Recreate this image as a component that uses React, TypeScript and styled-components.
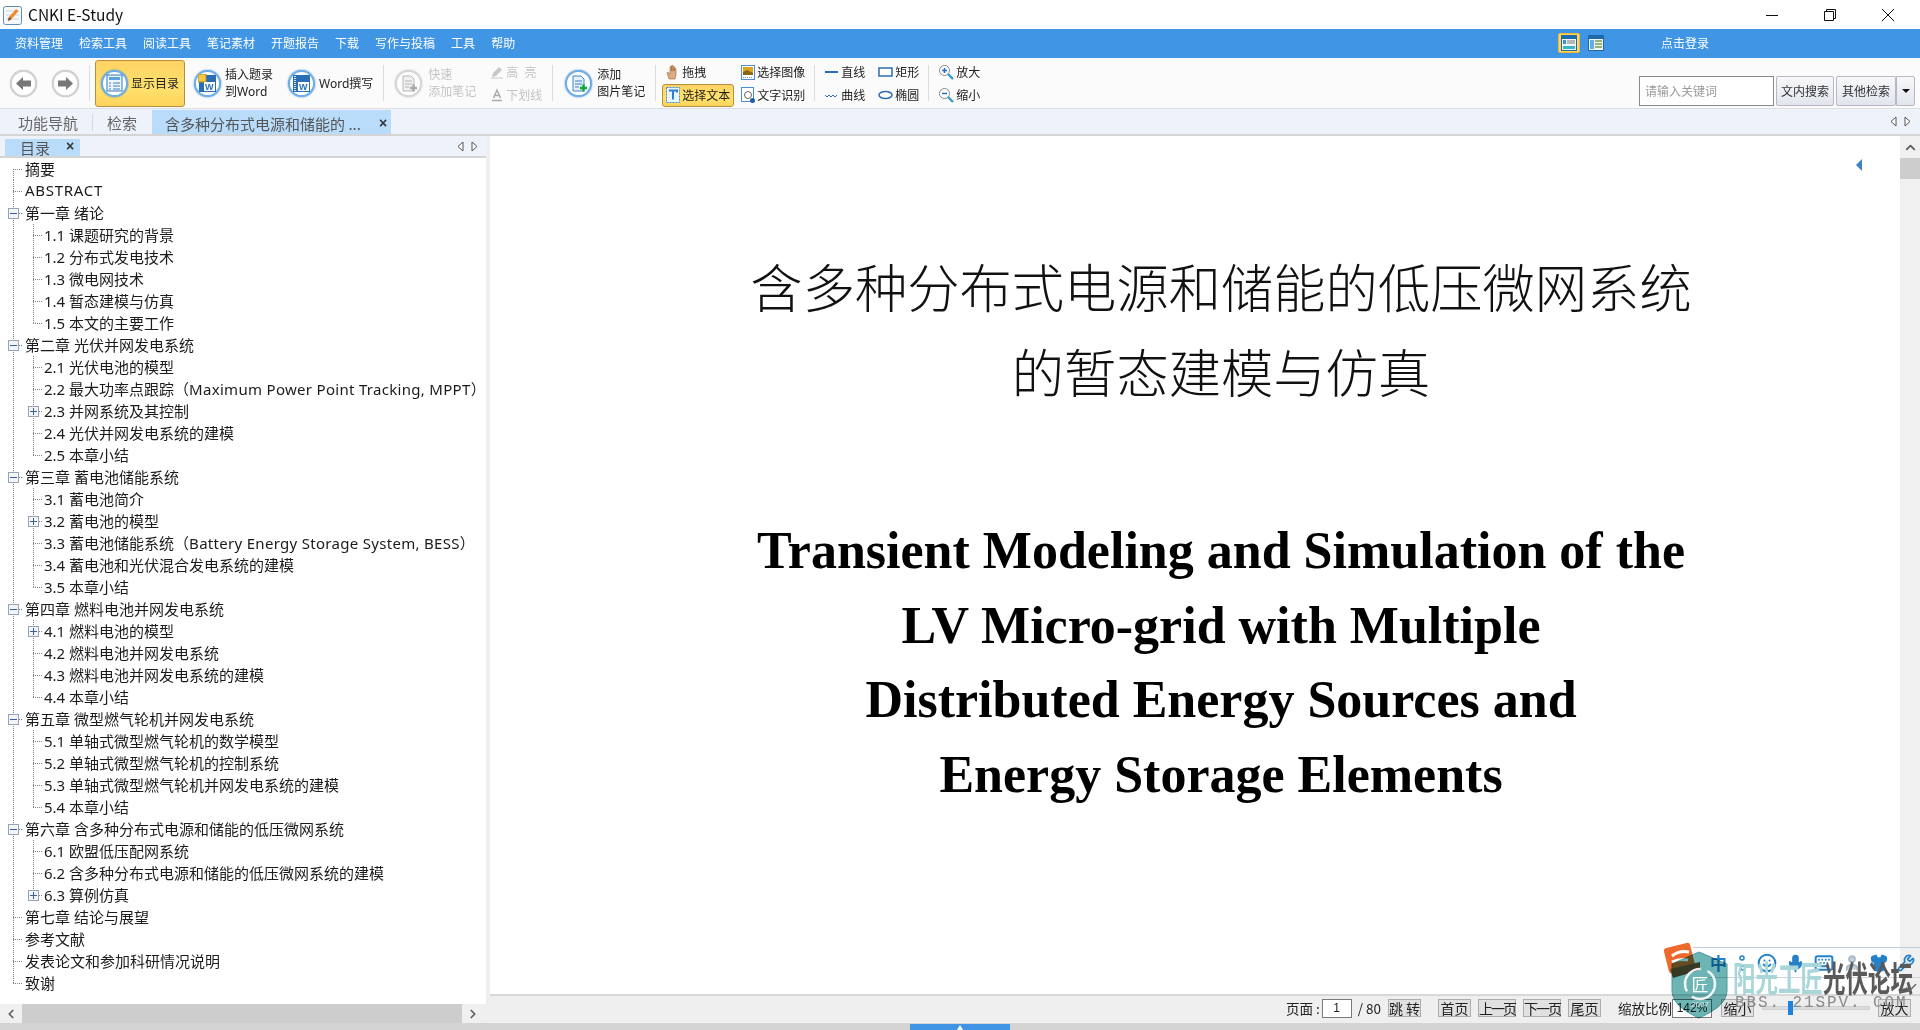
import React from 'react';
import styled, { createGlobalStyle, css } from 'styled-components';
import { Smile, Mic, Keyboard, User, Shirt, Wrench, Check, ChevronUp, ChevronLeft, ChevronRight } from 'lucide-react';

const GlobalStyle = createGlobalStyle`
	html, body {
		margin: 0;
		padding: 0;
		background: #fff;
		overflow: hidden;
	}
	* {
		box-sizing: border-box;
	}
	body {
		font-family: "Noto Sans CJK SC", "Liberation Sans", sans-serif;
		color: #222;
	}
`;

const Shell = styled.div`
	position: relative;
	width: 1920px;
	height: 1030px;
	display: flex;
	flex-direction: column;
	overflow: hidden;
`;

/* title + menu */
const TitleBar = styled.div`
	height: 29px;
	display: flex;
	align-items: center;
	padding-left: 3px;
	background: #fff;
`;

const AppName = styled.span`
	margin: 0 0 2px 6px;
	font-size: 15.5px;
	color: #111;
	font-family: "Noto Sans CJK SC", sans-serif;
`;

const WinControls = styled.div`
	margin-left: auto;
	display: flex;
	padding-right: 3px;
`;

const WinButton = styled.div`
	width: 58px;
	height: 29px;
	display: flex;
	align-items: center;
	justify-content: center;
`;

const MenuBar = styled.div`
	height: 29px;
	background: #4095e5;
	display: flex;
	align-items: center;
	padding: 0 0 2px 15px;
	gap: 16px;
	color: #fff;
	font-size: 12px;
`;

const MenuItem = styled.span`
	white-space: nowrap;
`;

const LayoutSwitch = styled.div`
	margin-left: auto;
	display: flex;
	align-items: center;
	gap: 5px;
`;

const LayoutBtn = styled.div<{ $on?: boolean }>`
	width: 22px;
	height: 20px;
	display: flex;
	align-items: center;
	justify-content: center;
	border-radius: 2px;
	border: 1px solid ${(p) => (p.$on ? '#f2b632' : 'transparent')};
	background: ${(p) => (p.$on ? '#ffd75e' : 'transparent')};
`;

const Login = styled.span`
	margin-left: 38px;
	margin-right: 211px;
	font-size: 12px;
`;

/* toolbar */
const Toolbar = styled.div`
	height: 51px;
	background: #fbfbfb;
	border-bottom: 1px solid #dedede;
	display: flex;
	align-items: center;
	font-family: "Noto Sans", "Noto Sans CJK SC", sans-serif;
	font-size: 12px;
	line-height: 17px;
	color: #222;
`;

const NavCircle = styled.div<{ $ml: number }>`
	width: 27px;
	height: 27px;
	margin-left: ${(p) => p.$ml}px;
	border-radius: 50%;
	border: 2px solid #d4d4d4;
	background: #fff;
	box-shadow: 0 0 1px #999;
	display: flex;
	align-items: center;
	justify-content: center;
	flex: none;
`;

const Sep = styled.div<{ $ml: number }>`
	width: 1px;
	height: 36px;
	margin-left: ${(p) => p.$ml}px;
	background: #dcdcdc;
	flex: none;
`;

const Tool = styled.div<{ $ml: number; $w?: number; $active?: boolean; $off?: boolean; $gap?: number }>`
	margin-left: ${(p) => p.$ml}px;
	${(p) => p.$w && `width: ${p.$w}px;`}
	display: flex;
	align-items: center;
	gap: ${(p) => p.$gap ?? 4}px;
	flex: none;
	white-space: nowrap;
	color: ${(p) => (p.$off ? '#c4c4c4' : '#222')};
	${(p) =>
		p.$active &&
		css`
			height: 47px;
			padding-left: 5px;
			border: 1px solid #b88f3e;
			border-radius: 3px;
			background: linear-gradient(#fdd364, #ffe16c 60%, #fdd45c);
		`}
`;

const ToolCircle = styled.div<{ $off?: boolean }>`
	width: 27px;
	height: 27px;
	border-radius: 50%;
	border: 2px solid ${(p) => (p.$off ? '#d6d6d6' : '#6eaee6')};
	background: #fff;
	box-shadow: 0 0 2px ${(p) => (p.$off ? '#bbb' : '#4c90d0')};
	display: flex;
	align-items: center;
	justify-content: center;
	flex: none;
`;

const Stack = styled.div`
	display: flex;
	flex-direction: column;
`;

const SmallCol = styled.div<{ $ml: number; $w: number }>`
	margin-left: ${(p) => p.$ml}px;
	width: ${(p) => p.$w}px;
	padding-top: 1px;
	flex: none;
	display: flex;
	flex-direction: column;
`;

const SmallTool = styled.div<{ $active?: boolean; $off?: boolean; $pl?: number }>`
	height: 23px;
	display: flex;
	align-items: center;
	gap: 2px;
	white-space: nowrap;
	padding-left: ${(p) => p.$pl ?? 0}px;
	color: ${(p) => (p.$off ? '#c4c4c4' : '#222')};
	${(p) =>
		p.$active &&
		css`
			border: 1px solid #b88f3e;
			border-radius: 3px;
			background: linear-gradient(#fdd364, #ffe16c 60%, #fdd45c);
		`}
`;

const SearchArea = styled.div`
	margin-left: auto;
	margin-right: 5px;
	display: flex;
	gap: 2px;
	align-self: flex-end;
	margin-bottom: 2px;
`;

const SearchInput = styled.div`
	width: 135px;
	height: 30px;
	border: 1px solid #8a8a8a;
	background: #fff;
	color: #999;
	padding-left: 5px;
	display: flex;
	align-items: center;
`;

const SearchButton = styled.div<{ $w: number }>`
	width: ${(p) => p.$w}px;
	height: 30px;
	display: flex;
	align-items: center;
	justify-content: center;
	border: 1px solid #b8b8c2;
	border-radius: 2px;
	background: linear-gradient(#f8f8fa, #e2e5ee);
	color: #333;
`;

const Caret = styled.div`
	width: 19px;
	height: 30px;
	margin-left: -2px;
	display: flex;
	align-items: center;
	justify-content: center;
	border: 1px solid #b8b8c2;
	border-radius: 0 2px 2px 0;
	background: linear-gradient(#f8f8fa, #e2e5ee);
	&::after {
		content: '';
		border-style: solid;
		border-width: 4px 4px 0;
		border-color: #111 transparent transparent;
	}
`;

/* doc tabs */
const TabBar = styled.div`
	height: 27px;
	background: #eef2fa;
	border-bottom: 2px solid #d4d4d4;
	display: flex;
	align-items: flex-end;
	font-size: 15px;
	color: #666;
`;

const PlainTab = styled.div<{ $ml: number }>`
	margin-left: ${(p) => p.$ml}px;
	height: 23px;
	line-height: 23px;
	white-space: nowrap;
`;

const TabDivider = styled.div`
	width: 1px;
	height: 17px;
	margin: 0 0 3px 14px;
	background: #d8d8d8;
`;

const ActiveTab = styled.div`
	margin-left: 15px;
	width: 239px;
	height: 24px;
	background: #b9dcfb;
	display: flex;
	align-items: center;
	padding: 2px 0 0 13px;
	color: #555;
	white-space: nowrap;
`;

const CloseMark = styled.span<{ $ml: number }>`
	margin-left: ${(p) => p.$ml}px;
	font-size: 14px;
	line-height: 1;
	color: #333;
	font-family: "Liberation Sans", sans-serif;
	font-weight: bold;
`;

const ArrowPair = styled.div<{ $mr: number }>`
	margin-left: auto;
	margin-right: ${(p) => p.$mr}px;
	align-self: center;
	display: flex;
	gap: 7px;
`;

/* main */
const Main = styled.div`
	flex: 1;
	display: flex;
	min-height: 0;
`;

const LeftPanel = styled.div`
	width: 486px;
	display: flex;
	flex-direction: column;
	background: #fff;
`;

const SubTabs = styled.div`
	height: 22px;
	flex: none;
	padding-left: 5px;
	background: #eef2fa;
	border-bottom: 2px solid #d4d4d4;
	display: flex;
	align-items: flex-end;
`;

const SubTab = styled.div`
	width: 75px;
	height: 17px;
	overflow: hidden;
	background: #b9dcfb;
	display: flex;
	align-items: flex-start;
	padding-left: 15px;
	font-size: 15px;
	line-height: 18px;
	color: #555;
`;

const Tree = styled.div`
	flex: 1;
	min-height: 0;
	padding-left: 3px;
	overflow: hidden;
`;

const TreeRow = styled.div`
	height: 22px;
	display: flex;
	align-items: center;
	white-space: nowrap;
	font-family: "Noto Sans", "Noto Sans CJK SC", sans-serif;
	font-size: 15px;
	color: #1b1b1b;
`;

const dotV = 'repeating-linear-gradient(to bottom, #808080 0 1px, transparent 1px 2px)';
const dotH = 'repeating-linear-gradient(to right, #808080 0 1px, transparent 1px 2px)';

type LineMode = 'full' | 'top' | 'bottom' | 'none';

const vSize: Record<LineMode, string> = { full: '1px 22px', top: '1px 11px', bottom: '1px 11px', none: '0 0' };
const vPos: Record<LineMode, string> = { full: '10px 0', top: '10px 0', bottom: '10px 11px', none: '0 0' };

const Guide = styled.div<{ $line: LineMode; $branch?: boolean }>`
	width: 20px;
	height: 22px;
	flex: none;
	display: flex;
	align-items: center;
	justify-content: center;
	padding-right: 1px;
	background-repeat: no-repeat;
	background-image: ${dotV}, ${dotH};
	background-size: ${(p) => vSize[p.$line]}, ${(p) => (p.$branch ? '9px 1px' : '0 0')};
	background-position: ${(p) => vPos[p.$line]}, 10px 11px;
`;

const Expander = styled.div<{ $plus?: boolean }>`
	width: 11px;
	height: 11px;
	margin-left: 1px;
	border: 1px solid #9aa3b2;
	background: #f2f5fa;
	display: flex;
	align-items: center;
	justify-content: center;
	position: relative;
	&::before {
		content: '';
		width: 7px;
		height: 1px;
		background: #3a5f95;
	}
	${(p) =>
		p.$plus &&
		css`
			&::after {
				content: '';
				position: absolute;
				width: 1px;
				height: 7px;
				background: #3a5f95;
			}
		`}
`;

const RowText = styled.span<{ $sub?: boolean }>`
	margin: 0 0 2px ${(p) => (p.$sub ? 1 : 2)}px;
`;

const LatinPart = styled.span<{ $track: number }>`
	letter-spacing: ${(p) => p.$track}px;
`;

const HScroll = styled.div`
	height: 19px;
	flex: none;
	background: #f0f0f0;
	display: flex;
	align-items: center;
`;

const ScrollEnd = styled.div`
	width: 22px;
	display: flex;
	align-items: center;
	justify-content: center;
	color: #606060;
`;

const HThumb = styled.div`
	width: 440px;
	height: 19px;
	background: #cdcdcd;
`;

const Gutter = styled.div`
	width: 4px;
	background: #efefef;
`;

const DocColumn = styled.div`
	flex: 1;
	display: flex;
	flex-direction: column;
	min-width: 0;
`;

const DocView = styled.div`
	flex: 1;
	display: flex;
	min-height: 0;
`;

const Page = styled.div`
	position: relative;
	flex: 1;
	background: #fff;
	padding: 107px 0 0 52px;
	text-align: center;
	overflow: hidden;
`;

const PageMarker = styled.div`
	position: absolute;
	top: 23px;
	right: 38px;
	border-style: solid;
	border-width: 6px 6px 6px 0;
	border-color: transparent #3f82c4 transparent transparent;
`;

const CnTitle = styled.div`
	font-size: 52.3px;
	line-height: 85px;
	font-weight: 300;
	color: #111;
	white-space: nowrap;
`;

const EnBlock = styled.div`
	margin-top: 101px;
`;

const EnTitle = styled.div`
	font-family: "Liberation Serif", serif;
	font-size: 52px;
	line-height: 74.7px;
	font-weight: bold;
	color: #000;
	white-space: nowrap;
`;

const VScroll = styled.div`
	width: 20px;
	background: #f0f0f0;
	display: flex;
	flex-direction: column;
	align-items: center;
`;

const VEnd = styled.div`
	height: 22px;
	display: flex;
	align-items: center;
	justify-content: center;
	color: #606060;
`;

const VThumb = styled.div`
	width: 20px;
	height: 21px;
	background: #cdcdcd;
`;

const StatusBar = styled.div`
	height: 29px;
	flex: none;
	background: #efefef;
	border-top: 2px solid #d8d8d8;
	display: flex;
	align-items: center;
	justify-content: flex-end;
	padding: 0 9px 3px 0;
	font-size: 13.5px;
	color: #222;
`;

const StatusText = styled.span<{ $ml?: number }>`
	margin-left: ${(p) => p.$ml ?? 0}px;
	white-space: nowrap;
`;

const StatusBtn = styled.div<{ $w: number; $ml: number; $tight?: boolean }>`
	width: ${(p) => p.$w}px;
	margin-left: ${(p) => p.$ml}px;
	height: 18px;
	border: 1px solid #adadad;
	background: #e1e1e1;
	display: flex;
	align-items: center;
	justify-content: center;
	white-space: nowrap;
	font-size: 14px;
	${(p) => p.$tight && 'letter-spacing: -2px;'}
`;

const StatusInput = styled.div<{ $w: number; $ml: number }>`
	width: ${(p) => p.$w}px;
	margin-left: ${(p) => p.$ml}px;
	height: 19px;
	border: 1px solid #7a7a7a;
	background: #fff;
	display: flex;
	align-items: center;
	justify-content: center;
	font-size: 12px;
	font-family: "Liberation Sans", sans-serif;
`;

const Slider = styled.div`
	width: 108px;
	margin-left: 8px;
	height: 4px;
	background: #dcdcdc;
	border: 1px solid #cfcfcf;
	display: flex;
	align-items: center;
	padding-left: 25px;
`;

const SliderThumb = styled.div`
	width: 5px;
	height: 14px;
	flex: none;
	background: #1c82dc;
`;

const BottomStrip = styled.div`
	height: 7px;
	flex: none;
	background: #d4d4d4;
	display: flex;
	justify-content: center;
	align-items: flex-end;
`;

const Handle = styled.div`
	width: 100px;
	height: 6px;
	background: #4095e5;
	display: flex;
	justify-content: center;
	align-items: flex-end;
	&::after {
		content: '';
		border-style: solid;
		border-width: 0 3px 5px;
		border-color: transparent transparent #fff;
	}
`;

/* watermark on top of everything */
const Watermark = styled.div`
	position: absolute;
	left: 1664px;
	top: 940px;
	width: 256px;
	height: 80px;
	pointer-events: none;
`;

const ImeLine = styled.div<{ $top: number; $color: string }>`
	position: absolute;
	left: 29px;
	right: 0;
	top: ${(p) => p.$top}px;
	height: 1px;
	background: ${(p) => p.$color};
`;

const ImeIcons = styled.div`
	position: absolute;
	left: 46px;
	top: 13px;
	width: 205px;
	display: flex;
	justify-content: space-between;
	align-items: center;
	color: #2480c8;
`;

const ImeZh = styled.span`
	font-size: 17px;
	line-height: 18px;
	font-weight: bold;
`;

const WmBrand = styled.div`
	position: absolute;
	left: 69px;
	top: 19px;
	display: flex;
	font-size: 22.5px;
	line-height: 22px;
	font-weight: bold;
	white-space: nowrap;
	transform: scaleY(1.55);
	transform-origin: top left;
`;

const WmPart = styled.span<{ $color: string }>`
	color: ${(p) => p.$color};
`;

const WmUrl = styled.div`
	position: absolute;
	left: 71px;
	top: 56px;
	font-family: "Liberation Mono", monospace;
	font-size: 16px;
	line-height: 14px;
	letter-spacing: 1.9px;
	color: #8a8a8a;
	white-space: nowrap;
`;

const WmArt = styled.svg<{ $multiply?: boolean }>`
	position: absolute;
	left: 0;
	top: 2px;
	${(p) => p.$multiply && 'mix-blend-mode: multiply;'}
`;

const WmCheck = styled.div`
	position: absolute;
	left: 240px;
	top: 36px;
	color: #666;
`;

/* icons */
const Tri: React.FC<{ dir: 'l' | 'r'; color?: string }> = ({ dir, color = '#555' }) => (
	<svg width='7' height='11' viewBox='0 0 7 11'>
		<path d={dir === 'l' ? 'M6 1L1 5.5L6 10Z' : 'M1 1L6 5.5L1 10Z'} fill='#fff' stroke={color} />
	</svg>
);

const NavArrow: React.FC<{ dir: 'l' | 'r' }> = ({ dir }) => (
	<svg width='17' height='15' viewBox='0 0 17 15'>
		<path d={dir === 'l' ? 'M1 7.5L8 1V4.5H16V10.5H8V14Z' : 'M16 7.5L9 1V4.5H1V10.5H9V14Z'} fill='#777' />
	</svg>
);

const DocIcon = () => (
	<svg width='17' height='18' viewBox='0 0 17 18'>
		<rect x='1' y='1' width='15' height='16' fill='#eef5fc' stroke='#2f78bd' />
		<rect x='3' y='3' width='11' height='3' fill='#5aa2e0' />
		<path d='M3 9h2M7 9h7M3 12h2M7 12h7M3 15h2M7 15h7' stroke='#3a7fbf' />
	</svg>
);

const WordIcon: React.FC<{ spiral?: boolean }> = ({ spiral }) => (
	<svg width='19' height='19' viewBox='0 0 19 19'>
		<rect x='1' y='1' width='17' height='17' fill='#2a6fb5' />
		{spiral ? (
			<path d='M3 2v15' stroke='#cfe2f5' strokeWidth='2' strokeDasharray='1 1' />
		) : (
			<rect x='0' y='0' width='8' height='8' fill='#f5c84a' stroke='#b58a20' />
		)}
		<rect x='6' y='8' width='11' height='9' fill='#fff' />
		<text x='7' y='16' fontSize='9' fontWeight='bold' fill='#2a6fb5' fontFamily='Liberation Sans'>
			W
		</text>
	</svg>
);

const NoteIcon: React.FC<{ off?: boolean }> = ({ off }) => {
	const c = off ? '#b5b5b5' : '#3d85c6';
	return (
		<svg width='19' height='19' viewBox='0 0 19 19'>
			<path d='M4 2h8l3 3v12H4z' fill={off ? '#f1f1f1' : '#e4f0fb'} stroke={c} />
			<path d='M6 7h7M6 10h7M6 13h4' stroke={c} />
			<path d='M11 14h7M14.5 10.5v7' stroke={off ? '#aaa' : '#12a83a'} strokeWidth='2.4' />
		</svg>
	);
};

const Pen = () => (
	<svg width='14' height='14' viewBox='0 0 14 14'>
		<path d='M2 12l1-4 6-6 3 3-6 6z' fill='#c8c8c8' />
		<path d='M1 13h12' stroke='#c8c8c8' />
	</svg>
);

const UnderlineA = () => (
	<svg width='14' height='14' viewBox='0 0 14 14'>
		<path d='M3.5 10L7 2l3.5 8M5 7.5h4' fill='none' stroke='#aaa' strokeWidth='1.5' />
		<path d='M2 12.5h10' stroke='#aaa' strokeWidth='1.5' />
	</svg>
);

const Hand = () => (
	<svg width='14' height='16' viewBox='0 0 14 16'>
		<path d='M3 15L1 9c0-1 1.500-1 2 0l1 1V3c0-1 1.500-1 1.500 0v4V2c0-1 1.500-1 1.500 0v5V3c0-1 1.500-1 1.500 0v4V5c0-1 1.500-1 1.500 0v6l-1 4z' fill='#e0aa80' stroke='#a06a3c' strokeWidth='.6' />
	</svg>
);

const TextSel = () => (
	<svg width='14' height='16' viewBox='0 0 14 16'>
		<rect x='.5' y='.5' width='13' height='15' fill='#eaf4fd' stroke='#3f8edb' strokeDasharray='2 1' />
		<path d='M3 3.500h8v2M7 3.500v9' fill='none' stroke='#2a7fd0' strokeWidth='2' />
	</svg>
);

const ImgSel = () => (
	<svg width='14' height='15' viewBox='0 0 14 15'>
		<rect x='.5' y='.5' width='13' height='14' fill='#fff' stroke='#4b90d0' />
		<rect x='2' y='2' width='10' height='8' fill='#dfa520' />
		<path d='M2 7l4-2 6 3v2H2z' fill='#8b6414' />
		<path d='M2 12.500h10' stroke='#888' strokeDasharray='1 1' />
	</svg>
);

const OcrSel = () => (
	<svg width='14' height='16' viewBox='0 0 14 16'>
		<rect x='.5' y='.5' width='12' height='14' fill='#fff' stroke='#4b90d0' />
		<circle cx='7' cy='8' r='3.500' fill='none' stroke='#666' />
		<rect x='9' y='11' width='5' height='5' rx='2.500' fill='#1f5fa8' />
	</svg>
);

const LineIcon: React.FC<{ kind: 'line' | 'curve' | 'rect' | 'oval' }> = ({ kind }) => (
	<svg width='15' height='12' viewBox='0 0 15 12'>
		{kind === 'line' && <path d='M1 6h13' stroke='#2e6db0' strokeWidth='2' />}
		{kind === 'curve' && <path d='M1 6l2 2 2-2 2 2 2-2 2 2 2-2' fill='none' stroke='#2e6db0' strokeWidth='1' />}
		{kind === 'rect' && <rect x='1' y='2' width='13' height='8' fill='#fff' stroke='#2e6db0' strokeWidth='1.5' />}
		{kind === 'oval' && <ellipse cx='7.500' cy='6' rx='6.500' ry='3.500' fill='#fff' stroke='#2e6db0' strokeWidth='1.5' />}
	</svg>
);

const Magnifier: React.FC<{ plus?: boolean }> = ({ plus }) => (
	<svg width='16' height='16' viewBox='0 0 16 16'>
		<circle cx='6.500' cy='6.500' r='5' fill='#fff' stroke='#8a8a8a' />
		<path d='M10 10l5 5' stroke='#2f9ed0' strokeWidth='2.400' />
		<path d='M4 6.500h5' stroke='#1c6fc0' strokeWidth='1.500' />
		{plus && <path d='M6.500 4v5' stroke='#1c6fc0' strokeWidth='1.500' />}
	</svg>
);

const LayoutIcon: React.FC<{ split?: boolean }> = ({ split }) => (
	<svg width='16' height='16' viewBox='0 0 16 16'>
		<rect x='.5' y='.5' width='15' height='15' fill='#eef6fb' stroke='#1f6aa8' />
		<rect x='1' y='1' width='14' height='3' fill='#1f6aa8' />
		{split ? (
			<>
				<rect x='2' y='5' width='4' height='9' fill='#62aee0' />
				<path d='M7 6h7M7 9h7M7 12h7' stroke='#7a9a4a' strokeWidth='1.400' />
			</>
		) : (
			<>
				<rect x='2' y='5' width='3' height='4' fill='#3d8fd0' />
				<path d='M6 6h8M6 8h8' stroke='#777' />
				<rect x='2' y='11' width='12' height='3' fill='#39b6c8' />
			</>
		)}
	</svg>
);

const AppIcon = () => (
	<svg width='19' height='20' viewBox='0 0 19 20'>
		<rect x='.5' y='1.500' width='18' height='18' rx='2' fill='#f6f8fb' stroke='#5f8fb8' />
		<path d='M3 6h13M3 10h13M3 14h13' stroke='#c9d6e2' />
		<path d='M5 16l1-4 7-8 2.500 2-7 8z' fill='#ef8a2d' />
		<path d='M5 16l1-4 2.500 2z' fill='#7a3b12' />
	</svg>
);

interface TocItem {
	text: string;
	latin?: string;
	track?: number;
	tail?: string;
	level: 0 | 1;
	exp?: '-' | '+';
	last?: boolean;
}

const toc: TocItem[] = [
	{ text: '摘要', level: 0 },
	{ text: '', latin: 'ABSTRACT', track: 0.7, level: 0 },
	{ text: '第一章 绪论', level: 0, exp: '-' },
	{ text: '1.1 课题研究的背景', level: 1 },
	{ text: '1.2 分布式发电技术', level: 1 },
	{ text: '1.3 微电网技术', level: 1 },
	{ text: '1.4 暂态建模与仿真', level: 1 },
	{ text: '1.5 本文的主要工作', level: 1, last: true },
	{ text: '第二章 光伏并网发电系统', level: 0, exp: '-' },
	{ text: '2.1 光伏电池的模型', level: 1 },
	{ text: '2.2 最大功率点跟踪（', latin: 'Maximum Power Point Tracking, MPPT', track: 0.3, tail: '）', level: 1 },
	{ text: '2.3 并网系统及其控制', level: 1, exp: '+' },
	{ text: '2.4 光伏并网发电系统的建模', level: 1 },
	{ text: '2.5 本章小结', level: 1, last: true },
	{ text: '第三章 蓄电池储能系统', level: 0, exp: '-' },
	{ text: '3.1 蓄电池简介', level: 1 },
	{ text: '3.2 蓄电池的模型', level: 1, exp: '+' },
	{ text: '3.3 蓄电池储能系统（', latin: 'Battery Energy Storage System, BESS', track: 0.3, tail: '）', level: 1 },
	{ text: '3.4 蓄电池和光伏混合发电系统的建模', level: 1 },
	{ text: '3.5 本章小结', level: 1, last: true },
	{ text: '第四章 燃料电池并网发电系统', level: 0, exp: '-' },
	{ text: '4.1 燃料电池的模型', level: 1, exp: '+' },
	{ text: '4.2 燃料电池并网发电系统', level: 1 },
	{ text: '4.3 燃料电池并网发电系统的建模', level: 1 },
	{ text: '4.4 本章小结', level: 1, last: true },
	{ text: '第五章 微型燃气轮机并网发电系统', level: 0, exp: '-' },
	{ text: '5.1 单轴式微型燃气轮机的数学模型', level: 1 },
	{ text: '5.2 单轴式微型燃气轮机的控制系统', level: 1 },
	{ text: '5.3 单轴式微型燃气轮机并网发电系统的建模', level: 1 },
	{ text: '5.4 本章小结', level: 1, last: true },
	{ text: '第六章 含多种分布式电源和储能的低压微网系统', level: 0, exp: '-' },
	{ text: '6.1 欧盟低压配网系统', level: 1 },
	{ text: '6.2 含多种分布式电源和储能的低压微网系统的建模', level: 1 },
	{ text: '6.3 算例仿真', level: 1, exp: '+', last: true },
	{ text: '第七章 结论与展望', level: 0 },
	{ text: '参考文献', level: 0 },
	{ text: '发表论文和参加科研情况说明', level: 0 },
	{ text: '致谢', level: 0, last: true },
];

const menus = ['资料管理', '检索工具', '阅读工具', '笔记素材', '开题报告', '下载', '写作与投稿', '工具', '帮助'];

const TocRow: React.FC<{ item: TocItem; first: boolean }> = ({ item, first }) => {
	const topLine: LineMode = first ? 'bottom' : item.level === 0 && item.last ? 'top' : 'full';
	const mark = item.exp && <Expander $plus={item.exp === '+'} />;
	return (
		<TreeRow>
			<Guide $line={topLine} $branch={item.level === 0}>
				{item.level === 0 && mark}
			</Guide>
			{item.level === 1 && (
				<Guide $line={item.last ? 'top' : 'full'} $branch>
					{mark}
				</Guide>
			)}
			<RowText $sub={item.level === 1}>
				{item.text}
				{item.latin && <LatinPart $track={item.track ?? 0}>{item.latin}</LatinPart>}
				{item.tail}
			</RowText>
		</TreeRow>
	);
};

const App: React.FC = () => (
	<Shell>
		<GlobalStyle />
		<TitleBar>
			<AppIcon />
			<AppName>CNKI E-Study</AppName>
			<WinControls>
				<WinButton>
					<svg width='12' height='12' viewBox='0 0 12 12'>
						<path d='M0 6.500h12' stroke='#111' />
					</svg>
				</WinButton>
				<WinButton>
					<svg width='12' height='12' viewBox='0 0 12 12'>
						<path d='M.5 2.500h9v9h-9zM2.500 2.500v-2h9v9h-2' fill='none' stroke='#111' />
					</svg>
				</WinButton>
				<WinButton>
					<svg width='12' height='12' viewBox='0 0 12 12'>
						<path d='M0 0l12 12M12 0L0 12' stroke='#111' />
					</svg>
				</WinButton>
			</WinControls>
		</TitleBar>

		<MenuBar>
			{menus.map((m) => (
				<MenuItem key={m}>{m}</MenuItem>
			))}
			<LayoutSwitch>
				<LayoutBtn $on>
					<LayoutIcon />
				</LayoutBtn>
				<LayoutBtn>
					<LayoutIcon split />
				</LayoutBtn>
			</LayoutSwitch>
			<Login>点击登录</Login>
		</MenuBar>

		<Toolbar>
			<NavCircle $ml={10}>
				<NavArrow dir='l' />
			</NavCircle>
			<NavCircle $ml={15}>
				<NavArrow dir='r' />
			</NavCircle>
			<Sep $ml={10} />
			<Tool $ml={5} $w={90} $active $gap={3}>
				<ToolCircle>
					<DocIcon />
				</ToolCircle>
				<span>显示目录</span>
			</Tool>
			<Tool $ml={9} $w={79}>
				<ToolCircle>
					<WordIcon />
				</ToolCircle>
				<Stack>
					<span>插入题录</span>
					<span>到Word</span>
				</Stack>
			</Tool>
			<Tool $ml={15}>
				<ToolCircle>
					<WordIcon spiral />
				</ToolCircle>
				<span>Word撰写</span>
			</Tool>
			<Sep $ml={10} />
			<Tool $ml={11} $off $gap={6}>
				<ToolCircle $off>
					<NoteIcon off />
				</ToolCircle>
				<Stack>
					<span>快速</span>
					<span>添加笔记</span>
				</Stack>
			</Tool>
			<SmallCol $ml={14} $w={62}>
				<SmallTool $off>
					<Pen />
					高 &nbsp;亮
				</SmallTool>
				<SmallTool $off>
					<UnderlineA />
					下划线
				</SmallTool>
			</SmallCol>
			<Sep $ml={0} />
			<Tool $ml={12} $gap={5}>
				<ToolCircle>
					<NoteIcon />
				</ToolCircle>
				<Stack>
					<span>添加</span>
					<span>图片笔记</span>
				</Stack>
			</Tool>
			<Sep $ml={10} />
			<SmallCol $ml={6} $w={72}>
				<SmallTool $pl={4}>
					<Hand />
					拖拽
				</SmallTool>
				<SmallTool $active $pl={3}>
					<TextSel />
					选择文本
				</SmallTool>
			</SmallCol>
			<SmallCol $ml={7} $w={66}>
				<SmallTool>
					<ImgSel />
					选择图像
				</SmallTool>
				<SmallTool>
					<OcrSel />
					文字识别
				</SmallTool>
			</SmallCol>
			<Sep $ml={7} />
			<SmallCol $ml={9} $w={54}>
				<SmallTool>
					<LineIcon kind='line' />
					直线
				</SmallTool>
				<SmallTool>
					<LineIcon kind='curve' />
					曲线
				</SmallTool>
			</SmallCol>
			<SmallCol $ml={0} $w={50}>
				<SmallTool>
					<LineIcon kind='rect' />
					矩形
				</SmallTool>
				<SmallTool>
					<LineIcon kind='oval' />
					椭圆
				</SmallTool>
			</SmallCol>
			<Sep $ml={0} />
			<SmallCol $ml={9} $w={50}>
				<SmallTool>
					<Magnifier plus />
					放大
				</SmallTool>
				<SmallTool>
					<Magnifier />
					缩小
				</SmallTool>
			</SmallCol>
			<SearchArea>
				<SearchInput>请输入关键词</SearchInput>
				<SearchButton $w={58}>文内搜索</SearchButton>
				<SearchButton $w={60}>其他检索</SearchButton>
				<Caret />
			</SearchArea>
		</Toolbar>

		<TabBar>
			<PlainTab $ml={18}>功能导航</PlainTab>
			<TabDivider />
			<PlainTab $ml={14}>检索</PlainTab>
			<ActiveTab>
				含多种分布式电源和储能的 ...
				<CloseMark $ml={18}>×</CloseMark>
			</ActiveTab>
			<ArrowPair $mr={9}>
				<Tri dir='l' />
				<Tri dir='r' />
			</ArrowPair>
		</TabBar>

		<Main>
			<LeftPanel>
				<SubTabs>
					<SubTab>
						目录
						<CloseMark $ml={16}>×</CloseMark>
					</SubTab>
					<ArrowPair $mr={8}>
						<Tri dir='l' />
						<Tri dir='r' />
					</ArrowPair>
				</SubTabs>
				<Tree>
					{toc.map((item, i) => (
						<TocRow key={item.text + i} item={item} first={i === 0} />
					))}
				</Tree>
				<HScroll>
					<ScrollEnd>
						<ChevronLeft size={14} strokeWidth={3} />
					</ScrollEnd>
					<HThumb />
					<ScrollEnd>
						<ChevronRight size={14} strokeWidth={3} />
					</ScrollEnd>
				</HScroll>
			</LeftPanel>
			<Gutter />
			<DocColumn>
				<DocView>
					<Page>
						<PageMarker />
						<CnTitle>含多种分布式电源和储能的低压微网系统</CnTitle>
						<CnTitle>的暂态建模与仿真</CnTitle>
						<EnBlock>
							<EnTitle>Transient Modeling and Simulation of the</EnTitle>
							<EnTitle>LV Micro-grid with Multiple</EnTitle>
							<EnTitle>Distributed Energy Sources and</EnTitle>
							<EnTitle>Energy Storage Elements</EnTitle>
						</EnBlock>
					</Page>
					<VScroll>
						<VEnd>
							<ChevronUp size={15} strokeWidth={3} />
						</VEnd>
						<VThumb />
					</VScroll>
				</DocView>
				<StatusBar>
					<StatusText>页面 :</StatusText>
					<StatusInput $w={30} $ml={2}>
						1
					</StatusInput>
					<StatusText $ml={6}>/ 80</StatusText>
					<StatusBtn $w={33} $ml={7}>
						跳 转
					</StatusBtn>
					<StatusBtn $w={33} $ml={17}>
						首页
					</StatusBtn>
					<StatusBtn $w={38} $ml={7} $tight>
						上一页
					</StatusBtn>
					<StatusBtn $w={38} $ml={7} $tight>
						下一页
					</StatusBtn>
					<StatusBtn $w={33} $ml={7}>
						尾页
					</StatusBtn>
					<StatusText $ml={17}>缩放比例</StatusText>
					<StatusInput $w={40} $ml={0}>
						142%
					</StatusInput>
					<StatusBtn $w={33} $ml={9}>
						缩小
					</StatusBtn>
					<Slider>
						<SliderThumb />
					</Slider>
					<StatusBtn $w={33} $ml={8}>
						放大
					</StatusBtn>
				</StatusBar>
			</DocColumn>
		</Main>
		<BottomStrip>
			<Handle />
		</BottomStrip>

		<Watermark>
			<ImeLine $top={7} $color='#c0ced8' />
			<ImeLine $top={37} $color='#d4d4d4' />
			<ImeIcons>
				<ImeZh>中</ImeZh>
				<svg width='12' height='20' viewBox='0 0 12 20'>
					<circle cx='6' cy='5' r='2' fill='none' stroke='#2480c8' strokeWidth='1.5' />
					<circle cx='7' cy='15' r='2' fill='none' stroke='#2480c8' strokeWidth='1.5' />
				</svg>
				<Smile size={20} strokeWidth={2.4} />
				<Mic size={19} strokeWidth={2.4} fill='#2480c8' />
				<Keyboard size={20} strokeWidth={2.4} />
				<User size={18} strokeWidth={2.4} color='#a8b8c8' fill='#c4d0da' />
				<Shirt size={18} strokeWidth={2.4} fill='#2480c8' />
				<Wrench size={18} strokeWidth={2.4} />
			</ImeIcons>
			<WmArt width='66' height='78' viewBox='0 0 66 78'>
				<rect x='2' y='3' width='27' height='26' rx='3' fill='#ee6a2c' transform='rotate(-14 16 16)' />
				<path d='M8 14c6-5 12-5 17-4M8 20c6-3 11-3 16-2' fill='none' stroke='#fff' strokeWidth='3' />
				<path d='M6 27l30-7v8L9 36z' fill='#7d5234' />
			</WmArt>
			<WmArt $multiply width='66' height='78' viewBox='0 0 66 78'>
				<path d='M35 10L63 22V48C63 62 48 70 35 76C22 70 8 62 8 48V22Z' fill='#6db5b5' stroke='#4a9a9a' strokeWidth='1' />
			</WmArt>
			<WmArt width='66' height='78' viewBox='0 0 66 78'>
				<circle cx='36' cy='42' r='15' fill='none' stroke='#fff' strokeOpacity='.9' strokeWidth='2.500' strokeDasharray='32 7' />
				<text x='36' y='49' textAnchor='middle' fontSize='17' fill='#fff' fontFamily='Noto Sans CJK SC'>
					匠
				</text>
				<text x='36' y='65' textAnchor='middle' fontSize='8' fill='#d5eaea' fontFamily='Liberation Sans'>
					2007
				</text>
			</WmArt>
			<WmBrand>
				<WmPart $color='#a9d6d8'>阳光工匠</WmPart>
				<WmPart $color='#5a5a5a'>光伏论坛</WmPart>
			</WmBrand>
			<WmUrl>BBS. 21SPV. COM</WmUrl>
			<WmCheck>
				<Check size={14} strokeWidth={2.4} />
			</WmCheck>
		</Watermark>
	</Shell>
);

export default App;
